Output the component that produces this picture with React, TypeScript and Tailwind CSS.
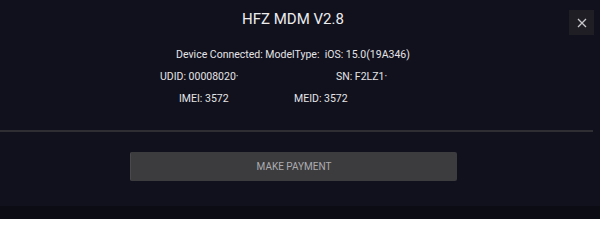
const App = () => {
  return (
    <div className="w-[600px] h-[219px] bg-[#11111d] flex flex-col overflow-hidden text-[#e4e4e6] font-['Roboto',sans-serif]">
      <div className="w-[594px] flex-1 flex flex-col">
        <div className="relative h-[40px] pr-[8px] flex items-start justify-center pt-[8px]">
          <h1 className="text-[15px] leading-[22px] text-[#ececee]">HFZ MDM V2.8</h1>
          <button className="absolute right-0 top-[10px] w-[25px] h-[25px] bg-[#1e1e24] flex items-center justify-center">
            <svg width="10" height="10" viewBox="0 0 10 10" fill="none" stroke="#c8c8cc" strokeWidth="1.3">
              <path d="M1 1L9 9M9 1L1 9" />
            </svg>
          </button>
        </div>

        <div className="text-[10.5px] leading-[22px] pt-[4px]">
          <div className="pr-[8px] text-center">Device Connected: ModelType:&nbsp; iOS: 15.0(19A346)</div>
          <div className="flex pl-[160px]">
            <span className="w-[176px]">UDID: 00008020·</span>
            <span>SN: F2LZ1·</span>
          </div>
          <div className="flex pl-[179px]">
            <span className="w-[115px]">IMEI: 3572</span>
            <span>MEID: 3572</span>
          </div>
        </div>

        <div className="mt-[20px] h-[2px] w-[593px] bg-[#2e2e33]" />

        <div className="pt-[20px] pl-[130px]">
          <button className="w-[327px] h-[29px] bg-[#3c3c3e] rounded-[2px] border-l border-[#4a4a4c] text-[10px] uppercase text-[#acacb0]">
            Make Payment
          </button>
        </div>
      </div>
      <div className="h-[13px] bg-[#0c0c15]" />
    </div>
  );
};

export default App;
